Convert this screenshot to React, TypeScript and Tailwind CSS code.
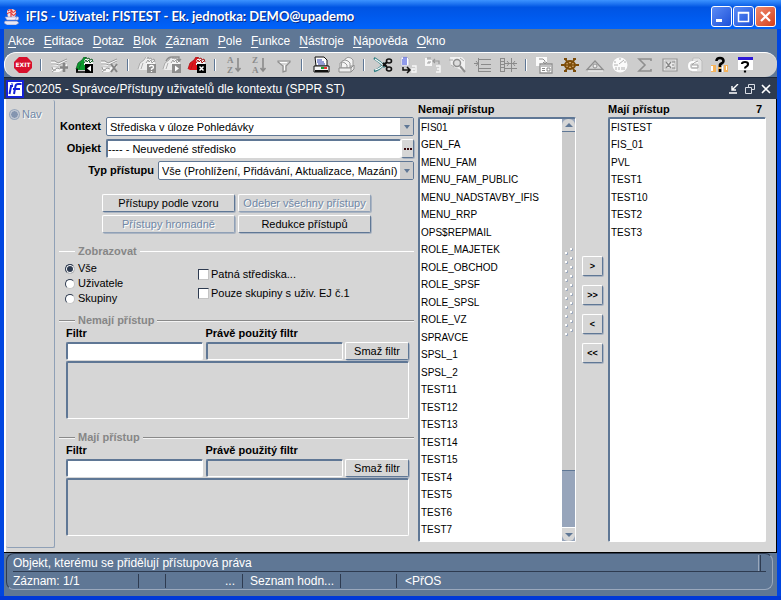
import type { ReactNode } from 'react';

const menuItems = ['Akce', 'Editace', 'Dotaz', 'Blok', 'Záznam', 'Pole', 'Funkce', 'Nástroje', 'Nápověda', 'Okno'];

const withoutAccess = [
  'FIS01', 'GEN_FA', 'MENU_FAM', 'MENU_FAM_PUBLIC', 'MENU_NADSTAVBY_IFIS', 'MENU_RRP',
  'OPS$REPMAIL', 'ROLE_MAJETEK', 'ROLE_OBCHOD', 'ROLE_SPSF', 'ROLE_SPSL', 'ROLE_VZ',
  'SPRAVCE', 'SPSL_1', 'SPSL_2', 'TEST11', 'TEST12', 'TEST13', 'TEST14', 'TEST15',
  'TEST4', 'TEST5', 'TEST6', 'TEST7',
];

const withAccess = ['FISTEST', 'FIS_01', 'PVL', 'TEST1', 'TEST10', 'TEST2', 'TEST3'];

/** Sunken edge: blue on the top left, white on the bottom right. */
const sunken =
  'rounded-[2px] border-t-2 border-l-2 border-r border-b border-t-[#5f7795] border-l-[#5f7795] border-r-white border-b-white';
const raised =
  'rounded-[2px] border border-t-white border-l-white border-r-[#5f7795] border-b-[#5f7795] shadow-[1px_1px_0_#aab4c2]';

/* ---------- toolbar drawings, all on a 20x18 grid ---------- */

function Bag({ fill, edge }: { fill: string; edge: string }) {
  return (
    <>
      <path d="M1 13 3 7l4-3 2-3h2v3l-1 10H3z" fill={fill} />
      <path d="m9 5 2-3 5 1 2 4v2H9z" fill="#f6f6f6" />
      <path d="m10 3 1-2 1 2 2-1 1 2 2-1 1 3M9 7l2-3 1 2 2-2 1 3 2-2" stroke={edge} fill="none" />
      <path d="M1 13 3 7l4-3 2-3M4 13l2-6" stroke={edge} strokeWidth="0.8" fill="none" />
    </>
  );
}

function Record() {
  return (
    <>
      <path d="M1 5h4l3 2 9-4v3L8 10 1 9zM2 11l7 1 8-4v3l-8 5H2z" fill="#f7f7f7" />
      <path d="M1 5h4l3 2 9-4M1 8h5l3 1 8-4M2 11l1 3h3M2 16l5-4 3 1" stroke="#979797" fill="none" />
    </>
  );
}

function SortLetters({ top, bottom }: { top: string; bottom: string }) {
  return (
    <>
      <g fill="#8b8b8b" fontFamily="Liberation Serif, serif" fontSize="9" fontWeight="bold">
        <text x="3" y="7">{top}</text>
        <text x="3" y="17">{bottom}</text>
      </g>
      <path d="M14 2v13M11.500 12l2.500 3 2.500-3" stroke="#8b8b8b" strokeWidth="1.600" fill="none" />
    </>
  );
}

const toolGroups: { label: string; icon: ReactNode }[][] = [
  [
    {
      label: 'Konec',
      icon: (
        <>
          <path d="M6 1h8l5 5v6l-5 5H6l-5-5V6z" fill="#d8102c" />
          <text x="10" y="11" textAnchor="middle" fontSize="6" fontWeight="bold" fill="#fff" fontFamily="DejaVu Sans, sans-serif">
            EXIT
          </text>
        </>
      ),
    },
  ],
  [
    {
      label: 'Nový záznam',
      icon: (
        <>
          <Record />
          <path d="M14 7v9M10 11.500h8" stroke="#858585" strokeWidth="2.600" />
        </>
      ),
    },
    {
      label: 'Uložit',
      icon: (
        <>
          <Bag fill="#0a9a2c" edge="#17602a" />
          <path d="M10 8h8v9h-8z" fill="#000" />
          <path d="M16 9.500v6L12 12.500z" fill="#fff" />
          <path d="M1 14h2M2 12.500v4M1 16h9" stroke="#000" strokeWidth="1.500" />
        </>
      ),
    },
    {
      label: 'Zrušit záznam',
      icon: (
        <>
          <Record />
          <path d="m11 8 6 8M17 8l-6 8" stroke="#858585" strokeWidth="2" />
        </>
      ),
    },
  ],
  [
    {
      label: 'Zadat dotaz',
      icon: (
        <>
          <Bag fill="#eeeeee" edge="#a0a0a0" />
          <path d="M10 8h9v9h-9z" fill="#8d8d8d" />
          <path d="M12.500 11q0-1.500 2-1.500t2 1.500-2 2v1M14.500 15v1" stroke="#fff" strokeWidth="1.300" fill="none" />
        </>
      ),
    },
    {
      label: 'Provést dotaz',
      icon: (
        <>
          <Bag fill="#eeeeee" edge="#a0a0a0" />
          <path d="M4 5q2-4 6-4h7v4M15 3l2 2 2-2" stroke="#8d8d8d" strokeWidth="1.300" fill="none" />
          <path d="M10 8h9v9h-9z" fill="#8d8d8d" />
          <path d="M13 9.500v6l4-3z" fill="#fff" />
        </>
      ),
    },
    {
      label: 'Zrušit dotaz',
      icon: (
        <>
          <Bag fill="#e0141c" edge="#a81616" />
          <path d="M10 8h9v9h-9z" fill="#000" />
          <path d="m12.500 10.500 4 4M16.500 10.500l-4 4" stroke="#fff" strokeWidth="1.500" />
        </>
      ),
    },
  ],
  [
    { label: 'Třídit vzestupně', icon: <SortLetters top="A" bottom="Z" /> },
    { label: 'Třídit sestupně', icon: <SortLetters top="Z" bottom="A" /> },
    {
      label: 'Filtr',
      icon: (
        <>
          <path d="M4 5h12v1l-4 4v5l-3 1v-6L4 6z" fill="#d7d7d7" stroke="#8f8f8f" strokeWidth="1.200" />
          <path d="M6 6.500h7M10.500 9v5" stroke="#fff" fill="none" />
        </>
      ),
    },
  ],
  [
    {
      label: 'Tisk',
      icon: (
        <>
          <path d="M4 1h9l3 3v6H5z" fill="#fff" stroke="#111" />
          <path d="M6 4h5M6 6h7M7 8h7" stroke="#2b3ba8" />
          <path d="M3 10h15v6H3z" fill="#f4f4f4" stroke="#111" />
          <path d="M4 14h13v2H4z" fill="#111" />
          <path d="M10 11h3v2h-3z" fill="#18a030" />
          <path d="M13 11h3v2h-3z" fill="#e8332a" />
        </>
      ),
    },
    {
      label: 'Tisk sestavy',
      icon: (
        <>
          <path d="M9 3q3-3 6-1l2 2v6H8z" fill="#f4f4f4" stroke="#999" />
          <path d="M6 5q3-2 6 0l2 2v5H5zM4 7q3-2 5 0l2 2v4H4z" fill="#f4f4f4" stroke="#999" />
          <path d="M3 12h12v4H3zM15 12l3-3v4l-3 3" fill="#eee" stroke="#8f8f8f" />
        </>
      ),
    },
  ],
  [
    {
      label: 'Vyjmout',
      icon: (
        <>
          <path d="M1 2q5 3 11 9M1 15q5-1 11-8" stroke="#2d7d83" strokeWidth="2.600" fill="none" />
          <path d="M2 3q5 3 9 7M2 14q5-1 9-6" stroke="#fff" strokeWidth="1.200" fill="none" />
          <path d="m10 7 4 4M10 10l4-4" stroke="#111" strokeWidth="2" />
          <ellipse cx="16" cy="5" rx="2.500" ry="2" fill="none" stroke="#111" strokeWidth="1.600" />
          <ellipse cx="16" cy="13" rx="2.500" ry="2" fill="none" stroke="#111" strokeWidth="1.600" />
        </>
      ),
    },
    {
      label: 'Kopírovat',
      icon: (
        <>
          <path d="M3 1h6l2 2v7H3z" fill="#fff" stroke="#b9b9ca" />
          <path d="M5 2h4M4 4h5M4 6h5M4 8h5" stroke="#2336d6" strokeWidth="1.200" />
          <path d="M5 11v3h7M9 11l3 3-3 3" stroke="#111" strokeWidth="1.500" fill="none" />
          <path d="M14 10h4v6h-4v-3h3" stroke="#f7f7f7" strokeWidth="1.400" fill="none" />
        </>
      ),
    },
    {
      label: 'Vložit',
      icon: (
        <>
          <path d="M3 2v7h5V5H4" fill="none" stroke="#f7f7f7" strokeWidth="2" />
          <path d="M4 2h4M5 6h3M10 5h6v3M12 3l-2 2 2 2" fill="none" stroke="#999" strokeWidth="1.200" />
          <path d="M13 10h4v6h-4M14 13h3" fill="none" stroke="#f7f7f7" strokeWidth="1.500" />
        </>
      ),
    },
    {
      label: 'Hledat',
      icon: (
        <>
          <path d="M2 1h12l3 3v12l-8-4-6-2z" fill="#f1f1f1" />
          <path d="M1 4h4M12 2l4 3M3 9l3 2" stroke="#aaa" />
          <circle cx="9" cy="7" r="3.500" fill="#ddd" stroke="#8f8f8f" strokeWidth="1.500" />
          <path d="m12 10 5 6" stroke="#8f8f8f" strokeWidth="2" />
        </>
      ),
    },
    {
      label: 'Seznam',
      icon: <path d="M5.500 2v14M6 3.500h12M1 7.500h4M3 5l2 2.500L3 10M8 8.500h10M6 12.500h12M6 15.500h12" stroke="#8a8a8a" fill="none" />,
    },
    {
      label: 'Detail',
      icon: (
        <path
          d="M2.500 2v14M6.500 2v14M2 2.500h4M2 5.500h4M2 8.500h4M2 11.500h4M2 15.500h4M13.500 2v14M7 7.500h6M9 5l2 2.500L9 10M14 7.500h5M17 5l-2 2.500 2 2.500M7 12.500h12"
          stroke="#8a8a8a"
          fill="none"
        />
      ),
    },
  ],
  [
    {
      label: 'Export',
      icon: (
        <>
          <path d="M1 1h11v9H1z" fill="#fafafa" />
          <path d="M4 3h4l2 2v3M8 6l2 2 2-2" stroke="#8f8f8f" fill="none" />
          <path d="M5 8h12v9H5z" fill="#fff" stroke="#8f8f8f" strokeWidth="1.300" />
          <path d="M6 10h10M7 12.500h3M7 14.500h3M12 12v3h3v-3z" stroke="#888" fill="none" />
        </>
      ),
    },
    {
      label: 'Navigátor',
      icon: (
        <>
          <ellipse cx="10" cy="9" rx="5" ry="4" fill="#d9b07a" stroke="#7c4c08" strokeWidth="2" />
          <path d="M1 9h18M5 3l10 12M15 3 5 15" stroke="#7c4c08" strokeWidth="1.600" />
          <path d="M1 8h3v2H1zM16 8h3v2h-3zM4 2h3v2H4zM13 2h3v2h-3zM4 14h3v2H4zM13 14h3v2h-3z" fill="#7c4c08" />
        </>
      ),
    },
    {
      label: 'Pyramida',
      icon: (
        <>
          <path d="M10 5 18 13.500H2z" fill="#d8d8d8" stroke="#8f8f8f" strokeWidth="1.300" />
          <circle cx="10" cy="10" r="2" fill="#eee" stroke="#8f8f8f" />
          <path d="M3 15h15" stroke="#f7f7f7" />
        </>
      ),
    },
    {
      label: 'Čas',
      icon: (
        <>
          <circle cx="10" cy="9" r="7.500" fill="#fbfbfb" />
          <path d="M4 6h2M14 6h2M9 8l5-4M6 11v3M9 11v3M12 11v3M14 11v3M9 3h2M4 9h4" stroke="#b0b0b0" fill="none" />
        </>
      ),
    },
    {
      label: 'Součet',
      icon: <path d="M16 5V3H4l6 6-6 6h12v-2" fill="none" stroke="#8f8f8f" strokeWidth="1.600" />,
    },
    {
      label: 'Excel',
      icon: (
        <>
          <path d="M3 3h14v12H3z" fill="#e9e9e9" stroke="#969696" strokeWidth="1.200" />
          <path d="M5 5h10v8H5z" fill="none" stroke="#bbb" />
          <path d="m6 6 5 6M11 6l-5 6M12 6h3M12 9h2M12 12h3" stroke="#858585" strokeWidth="1.200" />
        </>
      ),
    },
    {
      label: 'Příloha',
      icon: (
        <>
          <path d="M8 2h6l3 3v11H6z" fill="#e4e4e4" stroke="#bbb" />
          <path d="M13 6H8q-4 0-4 4t4 4h4M7 10h5" stroke="#fff" strokeWidth="2" fill="none" />
          <path d="M13 5q-4 1-6 4h6v3H7" stroke="#a3a3a3" fill="none" />
        </>
      ),
    },
    {
      label: 'Kontextová nápověda',
      icon: (
        <>
          <path d="M1 9h5v7H1zM14 9h4v7h-4zM8 10h3v6H8z" fill="#f6b45c" />
          <path d="M1 10h2v5H1zM12 10h1v6h-1zM16 10h1v4h-1z" fill="#fff" />
          <path d="M6.500 5q0-3 3.500-3t3.500 3q0 1.500-2 2.500T10 10v1M10 13v3" stroke="#000" strokeWidth="2.600" fill="none" />
        </>
      ),
    },
    {
      label: 'Nápověda',
      icon: (
        <>
          <path d="M3 2h15v12H3z" fill="#fff" />
          <path d="M3 1h15v3H3z" fill="#2c18d6" />
          <path d="M7 8q0-2 3-2t3 2-1.500 2.500T10 12.500M10 14.500v2" stroke="#000" strokeWidth="2.200" fill="none" />
        </>
      ),
    },
  ],
];

function Toolbar() {
  return (
    <div className="flex h-[25px] items-center rounded-l-xl rounded-r-xl border-t border-l border-white bg-[#cdcdcd] pl-[5px]">
      {toolGroups.map((group, index) => (
        <div key={group[0].label} className="flex items-center">
          {index > 0 ? (
            <span className="flex w-3 justify-center">
              <span className="h-3 w-[2px] border-r border-white bg-[#5f7795]" />
            </span>
          ) : null}
          {group.map(({ label, icon }) => (
            <button key={label} type="button" aria-label={label} className="flex w-[25px] justify-center">
              <svg viewBox="0 0 20 18" className="h-[18px] w-5">
                {icon}
              </svg>
            </button>
          ))}
        </div>
      ))}
    </div>
  );
}

function TitleBar() {
  const box = 'flex size-[21px] items-center justify-center rounded-[3px] border border-white';
  return (
    <header className="flex h-[29px] items-center bg-linear-to-b from-[#3c93ff] from-0% via-[#0054e3] via-25% to-[#0062fa] pt-1 pr-[5px] pl-1">
      <svg viewBox="0 0 16 17" className="h-[17px] w-4" aria-hidden="true">
        <path d="M3 4q0-3 4-3t5 3l-1 6H4z" fill="#f7e3e3" />
        <path d="M4 3q3-3 4 0T12 2M3 6q3-3 5 0t4-1M7 1v8" stroke="#e23b3b" strokeWidth="1.200" fill="none" />
        <path d="M1 9h12l-2 3H3zM12 9q4-1 2 3h-3" fill="#eef" stroke="#8d94c8" strokeWidth="0.600" />
        <path d="M1 13h12l2 2-3 2H3l-3-2z" fill="#e8e8f6" stroke="#7680ba" strokeWidth="0.600" />
      </svg>
      <h1 className="flex-1 pl-[6px] font-['Lato',sans-serif] text-[13px] font-bold text-white [text-shadow:1px_1px_0_#0a2a80]">
        iFIS - Uživatel: FISTEST - Ek. jednotka: DEMO@upademo
      </h1>
      <div className="flex gap-px">
        <button type="button" aria-label="Minimalizovat" className={`${box} bg-linear-to-br from-[#5b8bf5] to-[#1d4fd8]`}>
          <svg viewBox="0 0 17 17" className="size-[17px]"><path d="M3 11h6v3H3z" fill="#fff" /></svg>
        </button>
        <button type="button" aria-label="Maximalizovat" className={`${box} bg-linear-to-br from-[#5b8bf5] to-[#1d4fd8]`}>
          <svg viewBox="0 0 17 17" className="size-[17px]"><path d="M3.500 4.500h10v9h-10zM3 5h11" fill="none" stroke="#fff" strokeWidth="1.500" /></svg>
        </button>
        <button type="button" aria-label="Zavřít" className={`${box} bg-linear-to-br from-[#f08a6c] to-[#d43c14]`}>
          <svg viewBox="0 0 17 17" className="size-[17px]"><path d="m4 4 9 9M13 4l-9 9" stroke="#fff" strokeWidth="2.200" /></svg>
        </button>
      </div>
    </header>
  );
}

function FormTitle() {
  return (
    <div className="flex h-[22px] items-center border-t border-[#1b2638] bg-[#2e3b50] pr-[6px] pl-[2px] text-white">
      <svg viewBox="0 0 18 18" className="size-[18px]" aria-hidden="true">
        <path d="M0 0h18v18H0z" fill="#1422d8" />
        <path d="M2 2h14v14H2z" fill="#fff" />
        <path d="M5 6.500 3.500 14M6.200 3.500 6 4.500M8 14 9.500 6q.5-2 2.500-2h3.500M7 9h7M4 6h3" stroke="#1422d8" strokeWidth="2" fill="none" />
      </svg>
      <h2 className="flex-1 pl-[2px] text-xs">C0205 - Správce/Přístupy uživatelů dle kontextu (SPPR ST)</h2>
      <div className="flex gap-[6px]">
        <button type="button" aria-label="Sbalit">
          <svg viewBox="0 0 10 10" className="size-[10px]"><path d="M9 0 3 6M3 2v4h4M0 9h8" stroke="#fff" strokeWidth="1.400" fill="none" /></svg>
        </button>
        <button type="button" aria-label="Obnovit">
          <svg viewBox="0 0 10 10" className="size-[10px]"><path d="M3.500 3V.500h6v5H7M.500 3.500h6v6h-6z" stroke="#d8dce4" fill="none" /></svg>
        </button>
        <button type="button" aria-label="Zavřít formulář">
          <svg viewBox="0 0 10 10" className="size-[10px]"><path d="m1 1 8 8M9 1 1 9" stroke="#fff" strokeWidth="1.600" /></svg>
        </button>
      </div>
    </div>
  );
}

function SelectField({ id, value }: { id: string; value: string }) {
  return (
    <div className="flex h-[19px] flex-1 rounded-[2px] border border-[#5f7795] bg-white">
      <select id={id} className="min-w-0 flex-1 appearance-none pl-[3px] text-[11px] leading-4 outline-none">
        <option>{value}</option>
      </select>
      <span className="pointer-events-none flex w-[13px] items-center justify-center bg-[#cdcdcd]">
        <svg viewBox="0 0 6 4" className="h-1 w-[6px]"><path d="M0 0h6L3 4z" fill="#5f7795" /></svg>
      </span>
    </div>
  );
}

function PushButton({ children, disabled }: { children: ReactNode; disabled?: boolean }) {
  return (
    <button
      type="button"
      disabled={disabled}
      className={`${raised} h-[18px] text-[11px] leading-4 disabled:border-r-[#8fa0b6] disabled:border-b-[#8fa0b6] disabled:text-[#7088a6] disabled:[text-shadow:1px_1px_0_#fff]`}
    >
      {children}
    </button>
  );
}

function GroupTitle({ children, light }: { children: ReactNode; light?: boolean }) {
  const line = light ? 'h-px bg-white' : 'h-px bg-[#8a8a8a] shadow-[0_1px_0_#f4f4f4]';
  return (
    <div className="flex h-3 items-center gap-[3px]">
      <span className={`${line} w-4`} />
      <h3 className="text-[11px] leading-3 font-bold text-[#868686]">{children}</h3>
      <span className={`${line} flex-1`} />
    </div>
  );
}

function FilterGroup({ title, id }: { title: string; id: string }) {
  return (
    <section>
      <GroupTitle>{title}</GroupTitle>
      <div className="flex flex-col gap-px pr-[5px] pl-[7px]">
        <div className="grid grid-cols-[137px_137px_64px] justify-between gap-y-px">
          <label htmlFor={`${id}-filter`} className="text-[11px] leading-[15px] font-bold">Filtr</label>
          <label htmlFor={`${id}-used`} className="text-[11px] leading-[15px] font-bold">Právě použitý filtr</label>
          <span />
          <input id={`${id}-filter`} type="text" className={`${sunken} h-[18px] bg-white px-1 text-[11px] outline-none`} />
          <input id={`${id}-used`} type="text" readOnly className={`${sunken} h-[18px] px-1 text-[11px] outline-none`} />
          <PushButton>Smaž filtr</PushButton>
        </div>
        <textarea aria-label={`${title} – text filtru`} readOnly className={`${sunken} block h-[58px] w-full resize-none outline-none`} />
      </div>
    </section>
  );
}

function AccessForm() {
  return (
    <form className="flex min-w-0 flex-1 flex-col pt-[18px] pl-1" onSubmit={(event) => event.preventDefault()}>
      <div className="flex flex-col gap-[3px]">
        <div className="flex items-center gap-[5px]">
          <label htmlFor="kontext" className="w-[42px] text-right text-[11px] font-bold">Kontext</label>
          <SelectField id="kontext" value="Střediska v úloze Pohledávky" />
        </div>
        <div className="flex items-center gap-[5px]">
          <label htmlFor="objekt" className="w-[42px] text-right text-[11px] font-bold">Objekt</label>
          <div className="flex h-[19px] flex-1">
            <input
              id="objekt"
              type="text"
              defaultValue="---- - Neuvedené středisko"
              className={`${sunken} min-w-0 flex-1 bg-white text-[11px] outline-none`}
            />
            <button type="button" aria-label="Vybrat objekt" className={`${raised} flex w-[13px] items-center justify-center`}>
              <svg viewBox="0 0 8 2" className="h-[2px] w-2"><path d="M0 0h2v2H0zM3 0h2v2H3zM6 0h2v2H6z" fill="#3a0c10" /></svg>
            </button>
          </div>
        </div>
        <div className="flex items-center gap-1">
          <label htmlFor="typ" className="w-[95px] text-right text-[11px] font-bold">Typ přístupu</label>
          <SelectField id="typ" value="Vše (Prohlížení, Přidávání, Aktualizace, Mazání)" />
        </div>
      </div>

      <div className="mt-[14px] ml-[43px] grid grid-cols-[133px_133px] gap-x-[3px] gap-y-[3px]">
        <PushButton>Přístupy podle vzoru</PushButton>
        <PushButton disabled>Odeber všechny přístupy</PushButton>
        <PushButton disabled>Přístupy hromadně</PushButton>
        <PushButton>Redukce přístupů</PushButton>
      </div>

      <section className="mt-3">
        <GroupTitle light>Zobrazovat</GroupTitle>
        <div className="flex pt-1 pl-[6px]">
          <div className="flex w-[133px] flex-col">
            {['Vše', 'Uživatele', 'Skupiny'].map((label, index) => (
              <label key={label} className="flex h-[15px] items-center gap-[3px] text-[11px]">
                <input
                  type="radio"
                  name="zobrazovat"
                  defaultChecked={index === 0}
                  className="size-[10px] appearance-none rounded-full border border-t-[#2e3b50] border-l-[#2e3b50] border-r-[#c4c4c4] border-b-[#c4c4c4] bg-white checked:bg-[#2e3b50] checked:shadow-[inset_0_0_0_1px_#fff]"
                />
                {label}
              </label>
            ))}
          </div>
          <div className="flex flex-col gap-1 pt-[6px]">
            {['Patná střediska...', 'Pouze skupiny s uživ. EJ č.1'].map((label) => (
              <label key={label} className="flex h-[15px] items-center gap-[2px] text-[11px]">
                <input
                  type="checkbox"
                  className="size-[11px] appearance-none border border-t-[#2e3b50] border-l-[#2e3b50] border-r-[#c4c4c4] border-b-[#c4c4c4] bg-white"
                />
                {label}
              </label>
            ))}
          </div>
        </div>
      </section>

      <div className="mt-2 flex flex-col gap-3">
        <FilterGroup title="Nemají přístup" id="nemaji" />
        <FilterGroup title="Mají přístup" id="maji" />
      </div>
    </form>
  );
}

function ScrollBar() {
  return (
    <div className="flex w-[13px] flex-col bg-[#97a5bb]" aria-hidden="true">
      <span className="flex h-[13px] items-center justify-center rounded-t-md border-b border-[#5f7795] bg-[#d6d6d6]">
        <svg viewBox="0 0 8 4" className="h-1 w-2"><path d="M0 4h8L4 0z" fill="#5f7795" /></svg>
      </span>
      <span className="flex flex-6 items-center justify-center border-b border-[#5f7795] bg-[#cbcbcb]">
        <svg viewBox="0 0 8 88" className="mt-[-18px] h-[88px] w-2">
          {Array.from({ length: 10 }, (_, i) => (
            <g key={i}>
              <path d={`M0 ${i * 9 + 4}h2v2H0zM5 ${i * 9}h2v2H5z`} fill="#fff" />
              <path d={`M1 ${i * 9 + 6.500}h1.500v-2M6 ${i * 9 + 2.500}h1.500v-2`} fill="none" stroke="#97a5bb" />
            </g>
          ))}
        </svg>
      </span>
      <span className="flex-1" />
      <span className="flex h-[14px] items-center justify-center rounded-b-md border-t border-white bg-[#d6d6d6]">
        <svg viewBox="0 0 8 4" className="h-1 w-2"><path d="M0 0h8L4 4z" fill="#5f7795" /></svg>
      </span>
    </div>
  );
}

function AccessList({ title, items, count, scroll }: { title: string; items: string[]; count?: number; scroll?: boolean }) {
  return (
    <section className="flex w-[158px] flex-col">
      <div className="flex justify-between pr-1 text-[11px] leading-[15px] font-bold">
        <h3>{title}</h3>
        {count ? <span>{count}</span> : null}
      </div>
      <div className={`${sunken} flex flex-1 bg-white`}>
        <ul
          role="listbox"
          aria-label={title}
          className="grid flex-1 grid-rows-[repeat(24,minmax(0,1fr))] pb-[2px] pl-px text-[10px] leading-4"
        >
          {items.map((item) => (
            <li key={item} role="option" aria-selected="false" className="flex items-center">
              {item}
            </li>
          ))}
        </ul>
        {scroll ? <ScrollBar /> : null}
      </div>
    </section>
  );
}

function StatusBar() {
  const cell = 'h-[14px] border-r border-[#2e3b50]';
  return (
    <footer className="border-t border-black bg-[#5f7795] px-[2px] pb-[6px] text-xs text-white">
      <div className="mr-[2px] rounded-lg border border-t-[#2e3b50] border-l-[#2e3b50] border-r-[#9aa8bc] border-b-[#9aa8bc] px-[6px]">
        <div className="flex h-[18px] items-center border-b border-[#2e3b50]">
          <p className="flex-1">Objekt, kterému se přidělují přístupová práva</p>
          <span className="mr-[5px] h-4 w-[3px] border-r border-l border-l-[#9aa8bc] border-r-[#2e3b50]" />
        </div>
        <div className="flex h-[17px] items-center leading-[14px]">
          <span className={`${cell} w-[126px]`}>Záznam: 1/1</span>
          <span className={`${cell} w-[27px]`} />
          <span className={`${cell} w-[77px] pr-[7px] text-right`}>...</span>
          <span className={`${cell} w-[98px] pl-[7px]`}>Seznam hodn...</span>
          <span className={`${cell} w-[56px]`} />
          <span className="pl-2">&lt;PřOS</span>
        </div>
      </div>
    </footer>
  );
}

export default function App() {
  return (
    <div className="flex min-h-screen flex-col border-b-4 border-[#0038d8] bg-[#5f7795] font-['Liberation_Sans',Arial,sans-serif] text-black">
      <TitleBar />
      <div className="flex flex-1 flex-col border-x-4 border-[#0046e0]">
        <nav className="flex h-[23px] items-center gap-[9px] pl-1 text-xs text-white">
          {menuItems.map((item) => (
            <a key={item} href="#">
              <span className="underline underline-offset-2">{item[0]}</span>
              {item.slice(1)}
            </a>
          ))}
        </nav>
        <Toolbar />
        <FormTitle />
        <main className="flex flex-1 border-r border-l-2 border-r-black border-l-white bg-[#d6d6d6]">
          <aside className="mt-px mb-1 w-[49px] rounded-[2px] border-r border-b border-[#8fa0b6] pt-[6px] pl-1">
            <button type="button" className="flex items-center gap-[3px] text-[11px] text-[#7088a6] [text-shadow:1px_1px_0_#fff]">
              <span className="size-[9px] rounded-full border border-[#d0d4dc] bg-[#8495b0] ring-1 ring-[#9aa8bc]" />
              Nav
            </button>
          </aside>
          <AccessForm />
          <div className="flex pt-[3px] pr-[10px] pb-[10px] pl-1">
            <AccessList title="Nemají přístup" items={withoutAccess} scroll />
            <div className="flex flex-col gap-[9px] pt-[154px] pr-[5px] pl-[6px]">
              {['>', '>>', '<', '<<'].map((label) => (
                <button key={label} type="button" className={`${raised} h-5 w-[21px] text-[9px] leading-4 font-bold`}>
                  {label}
                </button>
              ))}
            </div>
            <AccessList title="Mají přístup" items={withAccess} count={7} />
          </div>
        </main>
        <StatusBar />
      </div>
    </div>
  );
}
